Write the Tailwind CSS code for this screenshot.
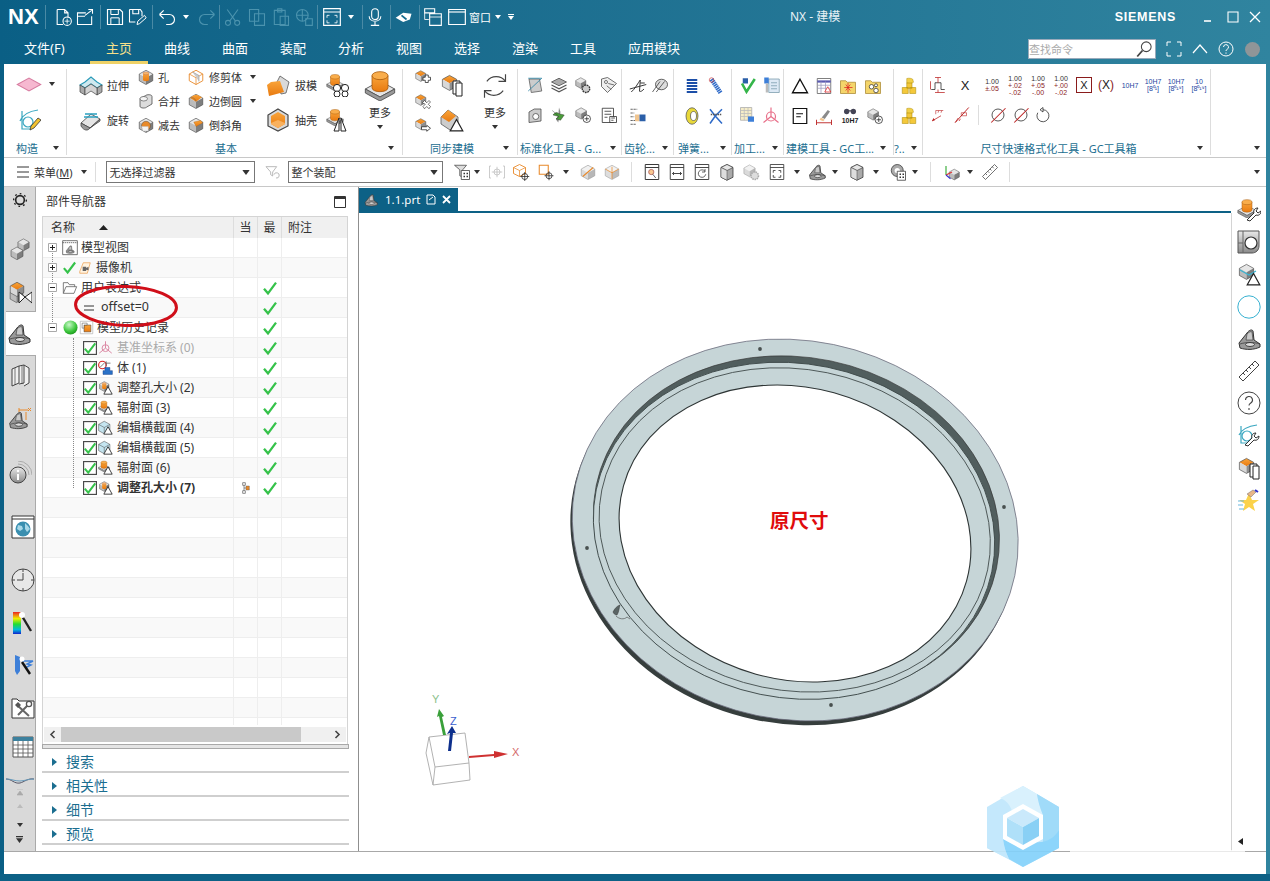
<!DOCTYPE html>
<html lang="zh"><head><meta charset="utf-8"><title>NX - 建模</title>
<script src="https://cdn.jsdelivr.net/npm/@tailwindcss/browser@4"></script></head>
<body class="overflow-hidden">
<svg class="absolute w-0 h-0">
<defs>
<linearGradient id="gg" x1="0" y1="0" x2="0" y2="1"><stop offset="0" stop-color="#e8e8e8"/><stop offset="1" stop-color="#8a8a8a"/></linearGradient>
<linearGradient id="og" x1="0" y1="0" x2="0" y2="1"><stop offset="0" stop-color="#f9a43a"/><stop offset="1" stop-color="#e87a10"/></linearGradient>
<linearGradient id="rb" x1="0" y1="0" x2="0" y2="1"><stop offset="0" stop-color="#e22"/><stop offset=".3" stop-color="#ee0"/><stop offset=".55" stop-color="#2d3"/><stop offset=".8" stop-color="#0bd"/><stop offset="1" stop-color="#12c"/></linearGradient>
<radialGradient id="ball" cx=".4" cy=".3" r=".8"><stop offset="0" stop-color="#c8f8c8"/><stop offset=".6" stop-color="#3fc83f"/><stop offset="1" stop-color="#128a12"/></radialGradient>
</defs>
<symbol id="ca" viewBox="0 0 6 4"><path d="M0 0h6L3 4z" fill="#333"/></symbol>
<symbol id="caw" viewBox="0 0 6 4"><path d="M0 0h6L3 4z" fill="#fff"/></symbol>
<symbol id="ck" viewBox="0 0 24 24"><path d="M3 13l6 7L21 4" fill="none" stroke="#35c24a" stroke-width="3.4"/></symbol>
<symbol id="tr" viewBox="0 0 24 24"><path d="M12 4l10 18H2z" fill="#fff" stroke="#222" stroke-width="2"/></symbol>
<symbol id="cb" viewBox="0 0 24 24"><path d="M12 3l9 5-9 5-9-5z" fill="url(#og)"/><path d="M3 8l9 5v9l-9-5z" fill="#d8d8d8"/><path d="M21 8l-9 5v9l9-5z" fill="#8e8e8e"/><path d="M12 3l9 5v9l-9 5-9-5V8z" fill="none" stroke="#444" stroke-width=".8"/></symbol>
<symbol id="cg" viewBox="0 0 24 24"><path d="M12 3l9 5-9 5-9-5z" fill="#e6e6e6"/><path d="M3 8l9 5v9l-9-5z" fill="#bcbcbc"/><path d="M21 8l-9 5v9l9-5z" fill="#7e7e7e"/><path d="M12 3l9 5v9l-9 5-9-5V8z" fill="none" stroke="#444" stroke-width=".8"/></symbol>
<symbol id="cy" viewBox="0 0 24 24"><path d="M1 15l11-6 11 6-11 6z" fill="#e4e4e4" stroke="#555" stroke-width=".7"/><path d="M1 15v3l11 6 11-6v-3l-11 6z" fill="#999" stroke="#555" stroke-width=".7"/><path d="M6 5v9c0 4 12 4 12 0V5z" fill="url(#og)" stroke="#a85b0c" stroke-width=".6"/><ellipse cx="12" cy="5" rx="6" ry="3" fill="#f9ad4b" stroke="#a85b0c" stroke-width=".6"/></symbol>
<symbol id="dia" viewBox="0 0 24 16"><path d="M1 8l11-6 11 6-11 6z" fill="#f6b8d0" stroke="#d77ca0"/></symbol>
<symbol id="sk" viewBox="0 0 24 24"><path d="M3 13C6 6 13 3 21 2M5 3v18h9" fill="none" stroke="#3aa7c0" stroke-width="1.2"/><circle cx="11" cy="14" r="5" fill="none" stroke="#3aa7c0" stroke-width="1.2"/><path d="M13 22l1-4 7-8 3 2-7 8z" fill="#f2c230" stroke="#333" stroke-width=".8"/></symbol>
<symbol id="ext" viewBox="0 0 24 24"><path d="M1 12l5-3 6-5 6 5 5 3-5 3-6-4-6 4z" fill="#cfe9ef" stroke="#2a9ab8" stroke-width="1.1"/><path d="M1 12v7l5 3v-7zM23 12v7l-5 3v-7z" fill="#aaa" stroke="#444" stroke-width=".7"/><path d="M6 15v7l6-4 6 4v-7l-6-4z" fill="#d4d4d4" stroke="#444" stroke-width=".7"/></symbol>
<symbol id="rev" viewBox="0 0 24 24"><path d="M2 15l10-9 9 5-10 9z" fill="#e5e5e5" stroke="#444" stroke-width=".8"/><path d="M2 15v3c3 5 7 5 9 2l10-7v-2l-10 9z" fill="#999" stroke="#444" stroke-width=".8"/><path d="M6 6h12M5 9l14 0" stroke="#2aa0c0" stroke-width="1.3"/></symbol>
<symbol id="hole" viewBox="0 0 24 24"><use href="#cg" width="24" height="24"/><path d="M8 7v9c0 2 8 2 8 0V7z" fill="url(#og)"/><ellipse cx="12" cy="7" rx="4" ry="2" fill="#f7b368" stroke="#955" stroke-width=".4"/></symbol>
<symbol id="uni" viewBox="0 0 24 24"><path d="M4 9v10c0 3 8 3 9 1l7-4V6c0-3-7-3-9-1L5 8z" fill="#dcdcdc" stroke="#444"/><ellipse cx="9" cy="9" rx="5" ry="3" fill="#f4f4f4" stroke="#444" stroke-width=".8"/></symbol>
<symbol id="sub" viewBox="0 0 24 24"><use href="#cg" width="24" height="24"/><circle cx="12" cy="13" r="6" fill="#e88a2a" stroke="#444" stroke-width=".6"/><path d="M6 14h9v6H8z" fill="#f4f4f4" stroke="#bbb" stroke-width=".6"/></symbol>
<symbol id="trim" viewBox="0 0 24 24"><path d="M12 3l9 5v9l-9 5-9-5V8z" fill="#fff" stroke="#e8892a" stroke-width="1.2"/><path d="M3 8l9 5 9-5M12 13v9" fill="none" stroke="#e8892a"/><path d="M7 5l9 5v8" fill="#ccc" stroke="#888" stroke-width=".7"/></symbol>
<symbol id="bl" viewBox="0 0 24 24"><use href="#cg" width="24" height="24"/><path d="M4 8c4-4 9-5 10-4l6 3-8 6z" fill="url(#og)"/><path d="M12 13c-1-4-3-6-8-5" fill="none" stroke="#555" stroke-width=".6"/></symbol>
<symbol id="cha" viewBox="0 0 24 24"><use href="#cg" width="24" height="24"/><path d="M9 8l9-2 3 3-9 5z" fill="url(#og)" stroke="#a85b0c" stroke-width=".4"/></symbol>
<symbol id="dr" viewBox="0 0 24 24"><path d="M11 9L14 3l9 6-3 11-5 1z" fill="#d9d9d9" stroke="#444" stroke-width=".7"/><path d="M1 13L5 7l6 2 9 0-0 .5-5 11-13 3z" fill="none"/><path d="M1 12l4-3 9-1 4 11-15 4z" fill="url(#og)"/></symbol>
<symbol id="she" viewBox="0 0 24 24"><path d="M12 1l10 6v11l-10 5-10-5V7z" fill="#d8d8d8" stroke="#444" stroke-width="1.2"/><path d="M5 8l7-4 7 4v8l-7 4-7-4z" fill="url(#og)"/><path d="M5 15l7-3 7 3v1l-7 4-7-4z" fill="#f9b15e"/></symbol>
<symbol id="cp" viewBox="0 0 24 24"><use href="#cy" width="18" height="18" y="0"/><g fill="#fff" stroke="#222"><circle cx="11" cy="15" r="3.6"/><circle cx="19" cy="15" r="3.6"/><circle cx="11" cy="21" r="3"/><circle cx="19" cy="21" r="3"/></g></symbol>
<symbol id="cm" viewBox="0 0 24 24"><use href="#cy" width="18" height="18" y="0"/><path d="M13 10l-5 13h5zM15 10l5 13h-5z" fill="#fff" stroke="#222"/></symbol>
<symbol id="sp" viewBox="0 0 24 24"><use href="#cb" width="18" height="18"/><path d="M15 8h4v3h3v4h-3v3h-4v-3h-3v-4h3z" fill="#fff" stroke="#222"/></symbol>
<symbol id="sx" viewBox="0 0 24 24"><use href="#cb" width="18" height="18"/><path d="M11 13l3-3 3 3 3-3 2 2-3 3 3 3-2 3-3-3-3 3-2-3 3-3z" fill="#fff" stroke="#222" stroke-width=".8"/></symbol>
<symbol id="sa" viewBox="0 0 24 24"><use href="#cb" width="18" height="18"/><path d="M10 13h7v-2l5 4-5 4v-2h-7z" fill="#fff" stroke="#222"/></symbol>
<symbol id="sc" viewBox="0 0 24 24"><use href="#cb" width="19" height="19"/><path d="M13 8h7v13h-7z" fill="#fff" stroke="#222"/><path d="M16 10h6v13h-6z" fill="#fff" stroke="#222"/></symbol>
<symbol id="st" viewBox="0 0 24 24"><path d="M1 9l7-7 10 7v9l-8 4-9-6z" fill="#ccc" stroke="#444" stroke-width=".7"/><path d="M1 9l7-7 8 6-7 6z" fill="url(#og)"/><use href="#tr" x="9" y="9" width="15" height="15"/></symbol>
<symbol id="ref" viewBox="0 0 24 24"><path d="M5 8A10 10 0 0 1 21 8M19 16A10 10 0 0 1 3 16" fill="none" stroke="#444"/><path d="M21 2v6h-6M3 22v-6h6" fill="none" stroke="#444"/></symbol>
<symbol id="ico-new" viewBox="0 0 24 24"><path d="M5 3h9l4 4v6M5 3v18h7M14 3v4h4" fill="none" stroke="#fff" stroke-width="1.3"/><circle cx="17" cy="17" r="5" fill="none" stroke="#fff" stroke-width="1.3"/><path d="M17 14v6M14 17h6" stroke="#fff"/></symbol>
<symbol id="ico-open" viewBox="0 0 24 24"><path d="M13 7H3v14h17V11" fill="none" stroke="#fff" stroke-width="1.3"/><path d="M3 11h9M12 10l8-6M16 3h5v5" fill="none" stroke="#fff" stroke-width="1.3"/></symbol>
<symbol id="ico-save" viewBox="0 0 24 24"><path d="M3 3h15l3 3v15H3z" fill="none" stroke="#fff" stroke-width="1.4"/><path d="M7 3v6h9V3M7 21v-8h10v8" fill="none" stroke="#fff" stroke-width="1.2"/></symbol>
<symbol id="ico-saveas" viewBox="0 0 24 24"><path d="M3 3h13l2 3v5M3 3v15h7M7 3v5h7V3" fill="none" stroke="#fff" stroke-width="1.3"/><path d="M12 21l1-4 8-7 2 3-8 7z" fill="none" stroke="#fff" stroke-width="1.2"/></symbol>
<symbol id="ico-undo" viewBox="0 0 24 24"><path d="M3 9h12a6 6 0 0 1 0 12h-4M3 9l5-5M3 9l5 5" fill="none" stroke="#fff" stroke-width="1.4"/></symbol>
<symbol id="ico-redo" viewBox="0 0 24 24"><path d="M21 9H9a6 6 0 0 0 0 12h4M21 9l-5-5M21 9l-5 5" fill="none" stroke="#4b93ae" stroke-width="1.4"/></symbol>
<symbol id="ico-cut" viewBox="0 0 24 24"><circle cx="6" cy="19" r="3" fill="none" stroke="#4b93ae" stroke-width="1.3"/><circle cx="17" cy="19" r="3" fill="none" stroke="#4b93ae" stroke-width="1.3"/><path d="M8 17L18 3M15 17L5 3" stroke="#4b93ae" stroke-width="1.3"/></symbol>
<symbol id="ico-copy" viewBox="0 0 24 24"><path d="M3 3h11v14H3zM9 8h12v14H9z" fill="none" stroke="#4b93ae" stroke-width="1.3"/></symbol>
<symbol id="ico-paste" viewBox="0 0 24 24"><path d="M4 4h13v17H4zM8 2h5v4H8zM11 11h10v11H11z" fill="none" stroke="#4b93ae" stroke-width="1.3"/></symbol>
<symbol id="ico-del" viewBox="0 0 24 24"><circle cx="10" cy="10" r="7" fill="none" stroke="#4b93ae" stroke-width="1.3"/><path d="M3 10h14M10 3v14M14 14h8v8h-8z" fill="none" stroke="#4b93ae" stroke-width="1.3"/></symbol>
<symbol id="ico-fit" viewBox="0 0 24 24"><path d="M2 2h20v20H2zM2 6h20" fill="none" stroke="#fff" stroke-width="1.4"/><path d="M6 10h3M6 10v3M18 10h-3M18 10v3M6 19h3M6 19v-3M18 19h-3M18 19v-3" stroke="#fff"/></symbol>
<symbol id="ico-mic" viewBox="0 0 24 24"><rect x="8" y="2" width="8" height="13" rx="4" fill="none" stroke="#fff" stroke-width="1.3"/><path d="M5 11c0 8 14 8 14 0M12 18v4M7 22h10" fill="none" stroke="#fff" stroke-width="1.3"/></symbol>
<symbol id="ico-hand" viewBox="0 0 24 24"><path d="M2 13l9-6 10 1-2 7-8 3z" fill="#fff"/><path d="M9 10l6 5" stroke="#12698d" stroke-width="2"/></symbol>
<symbol id="ico-win1" viewBox="0 0 24 24"><path d="M2 2h12v5H2zM8 8h14v14H8z" fill="none" stroke="#fff" stroke-width="1.3"/><path d="M8 12h14" stroke="#fff"/><path d="M2 7v8h5" fill="none" stroke="#fff"/></symbol>
<symbol id="ico-win2" viewBox="0 0 24 24"><path d="M2 3h20v18H2z" fill="none" stroke="#fff" stroke-width="1.4"/><path d="M2 6h20" stroke="#fff" stroke-width="1.4"/></symbol>
<symbol id="t-filt" viewBox="0 0 24 24"><path d="M3 4h16l-6 8v6l-3-2v-4z" fill="#fff" stroke="#aaa" stroke-width="1.2"/><path d="M15 16a4 4 0 1 1 3 5" fill="none" stroke="#aaa" stroke-width="1.2"/></symbol>
<symbol id="t-tree" viewBox="0 0 24 24"><path d="M2 3h16l-5 6v10l-4-2V9z" fill="#ddd" stroke="#444"/><path d="M11 10h11v12H11z" fill="#fff" stroke="#333"/><path d="M14 13h2v2h-2zM18 13h2v2h-2zM14 17h2v2h-2zM18 17h2v2h-2z" fill="#333"/></symbol>
<symbol id="t-snap" viewBox="0 0 24 24"><path d="M4 4H2v16h2M20 4h2v16h-2" fill="none" stroke="#bbb"/><circle cx="12" cy="12" r="4" fill="none" stroke="#bbb"/><path d="M12 5v14M5 12h14" stroke="#bbb"/></symbol>
<symbol id="t-wire" viewBox="0 0 24 24"><path d="M10 2l8 4v8l-8 4-8-4V6z" fill="#fff" stroke="#e8892a" stroke-width="1.2"/><path d="M2 6l8 4 8-4M10 10v8" fill="none" stroke="#e8892a"/><circle cx="17" cy="18" r="4" fill="none" stroke="#222"/><path d="M17 12v12M11 18h12" stroke="#222"/></symbol>
<symbol id="t-sq" viewBox="0 0 24 24"><path d="M3 3h12v12H3z" fill="#fff" stroke="#e8892a" stroke-width="1.4"/><circle cx="16" cy="17" r="4" fill="none" stroke="#222"/><path d="M16 11v12M10 17h12" stroke="#222"/></symbol>
<symbol id="t-f1" viewBox="0 0 24 24"><use href="#cg" width="24" height="24" opacity=".55"/><path d="M5 18L19 6" stroke="#e8892a" stroke-width="1.5"/></symbol>
<symbol id="t-f2" viewBox="0 0 24 24"><use href="#cg" width="24" height="24" opacity=".5"/><path d="M12 5v16M3 8l9 5 9-5" stroke="#e8892a" fill="none"/></symbol>
<symbol id="t-w1" viewBox="0 0 24 24"><path d="M3 2h18v20H3zM3 6h18" fill="none" stroke="#333" stroke-width="1.3"/><circle cx="11" cy="12" r="3.5" fill="#f8c890" stroke="#a55"/><path d="M13 15l4 5" stroke="#333"/></symbol>
<symbol id="t-w2" viewBox="0 0 24 24"><path d="M3 2h18v20H3zM3 6h18M6 14h12M6 14l2-2M6 14l2 2M18 14l-2-2M18 14l-2 2" fill="none" stroke="#333" stroke-width="1.2"/></symbol>
<symbol id="t-w3" viewBox="0 0 24 24"><path d="M3 2h18v20H3zM3 6h18" fill="none" stroke="#333" stroke-width="1.2"/><path d="M16 11a5 5 0 1 0 1 4M16 8v4h-4" fill="none" stroke="#333"/></symbol>
<symbol id="t-fit" viewBox="0 0 24 24"><path d="M3 2h18v20H3zM3 6h18M7 10h3M7 10v3M17 10h-3M17 10v3M7 19h3M7 19v-3M17 19h-3M17 19v-3" fill="none" stroke="#333" stroke-width="1.1"/></symbol>
<symbol id="t-gear" viewBox="0 0 24 24"><use href="#cg" width="20" height="20" opacity=".55"/><circle cx="17" cy="17" r="5" fill="#ddd" stroke="#aaa" stroke-width="2" stroke-dasharray="2 1"/></symbol>
<symbol id="t-part" viewBox="0 0 24 24"><path d="M2 16L10 6c2-3 5-4 6-2l1 9 6 4 0 3c-6 3-14 3-20 1z" fill="#9a9a9a" stroke="#333" stroke-width="1"/><path d="M3 17c6-2 14-2 20 0" fill="none" stroke="#333" stroke-width=".7"/><path d="M10 7c2-2 4-3 5-2l1 8-7 0z" fill="#c9c9c9" stroke="#333" stroke-width=".6"/><ellipse cx="13" cy="17.5" rx="4.5" ry="2" fill="#ddd" stroke="#333" stroke-width=".9"/></symbol>
<symbol id="t-hex" viewBox="0 0 24 24"><path d="M12 2l8 4v13l-8 4-8-4V6z" fill="#aaa" stroke="#333"/><path d="M4 6l8 4 8-4-8-4z" fill="#e6e6e6" stroke="#333" stroke-width=".8"/><path d="M12 10v13L4 19V6z" fill="#ddd" stroke="#333" stroke-width=".6"/></symbol>
<symbol id="t-ball" viewBox="0 0 24 24"><circle cx="11" cy="10" r="8" fill="#aaa" stroke="#333"/><circle cx="11" cy="10" r="3.5" fill="#fff"/><path d="M11 11h11v12H11z" fill="#fff" stroke="#333"/><path d="M14 14h2v2h-2zM18 14h2v2h-2zM14 18h2v2h-2zM18 18h2v2h-2z" fill="#333"/></symbol>
<symbol id="t-axis" viewBox="0 0 24 24"><use href="#cg" x="6" y="6" width="18" height="18"/><path d="M4 16V4" stroke="#3a3" stroke-width="1.5"/><path d="M4 16l8-4" stroke="#d33" stroke-width="1.5"/><path d="M4 16l6 5" stroke="#33c" stroke-width="1.5"/></symbol>
<symbol id="rule" viewBox="0 0 24 24"><path d="M2 18L18 2l4 4L6 22z" fill="#fff" stroke="#444"/><path d="M6 14l2 2M9 11l2 2M12 8l2 2M15 5l2 2" stroke="#444"/></symbol>
<symbol id="gear" viewBox="0 0 24 24"><circle cx="12" cy="12" r="6.5" fill="none" stroke="#222" stroke-width="2.4"/><circle cx="12" cy="12" r="9.5" fill="none" stroke="#222" stroke-width="2" stroke-dasharray="2.6 4.6"/></symbol>
<symbol id="l-stack" viewBox="0 0 24 24"><use href="#cg" x="8" y="0" width="15" height="15"/><use href="#cg" x="1" y="8" width="16" height="16"/></symbol>
<symbol id="l-asm" viewBox="0 0 24 24"><use href="#cg" y="7" width="17" height="17"/><use href="#cb" width="18" height="18"/><path d="M11 12l6 5-6 6zM24 12l-7 5 7 6z" fill="#fff" stroke="#222"/></symbol>
<symbol id="l-book" viewBox="0 0 24 24"><path d="M4 6l7-3v17l-7 3zM11 3l5-1v18l-5 1M16 2l5 3v15l-5 3" fill="#f0f0f0" stroke="#444"/><path d="M7 5v17M14 3v18" stroke="#444" stroke-width=".7"/></symbol>
<symbol id="l-dim" viewBox="0 0 24 24"><use href="#t-part" y="4" width="20" height="20"/><path d="M11 6V2M11 4h9M20 2l3 3M23 2l-3 3M18 6v8" fill="none" stroke="#e8892a"/></symbol>
<symbol id="l-info" viewBox="0 0 24 24"><circle cx="10" cy="14" r="8" fill="url(#gg)" stroke="#444"/><path d="M10 13v6" stroke="#fff" stroke-width="2"/><circle cx="10" cy="10" r="1.2" fill="#fff"/><path d="M10 3a11 11 0 0 1 11 11M10 0a14 14 0 0 1 14 14" fill="none" stroke="#aaa"/></symbol>
<symbol id="l-web" viewBox="0 0 24 24"><path d="M1 1h22v22H1zM1 4h22" fill="#fff" stroke="#333" stroke-width="1"/><circle cx="12" cy="14" r="7.5" fill="#3a8fb0"/><path d="M7 10l4 1 1 3-3 2-3-2M14 8l3 3 2 3-3 3-2-3z" fill="#a8d8e8"/></symbol>
<symbol id="l-clock" viewBox="0 0 24 24"><circle cx="12" cy="12" r="11" fill="#e8e8e8" stroke="#444"/><path d="M12 12V5M12 12H6M12 1v3M12 20v3M1 12h3M20 12h3" stroke="#444"/></symbol>
<symbol id="l-rb" viewBox="0 0 24 24"><rect x="2" y="1" width="8" height="22" fill="url(#rb)"/><path d="M11 5l9 15" stroke="#222" stroke-width="2.4"/><circle cx="11" cy="4" r="3" fill="#fff"/></symbol>
<symbol id="l-mill" viewBox="0 0 24 24"><path d="M4 2l5 2v14l-3 4-2-4z" fill="#3d7fd8"/><path d="M11 8h11l-6 3 4 1-6 3" fill="none" stroke="#3d7fd8" stroke-width="1.4"/><path d="M11 9l8 12" stroke="#111" stroke-width="2.4"/><circle cx="11" cy="6" r="2.5" fill="#fff"/></symbol>
<symbol id="l-tool" viewBox="0 0 24 24"><path d="M1 4h5l2 2h15v17H1z" fill="#fff" stroke="#333"/><path d="M6 10l12 11M18 9L7 20" stroke="#666" stroke-width="2"/><circle cx="18" cy="9" r="2.6" fill="#fff" stroke="#555" stroke-width="1.3"/><path d="M4 10l3-3 3 3-3 3z" fill="#555"/></symbol>
<symbol id="l-tab" viewBox="0 0 24 24"><path d="M2 2h20v20H2z" fill="#fff" stroke="#555"/><path d="M2 2h20v4H2z" fill="#3d819e"/><path d="M2 10h20M2 14h20M2 18h20M7 6v16M12 6v16M17 6v16" stroke="#555" stroke-width=".8"/></symbol>
<symbol id="r-wr" viewBox="0 0 24 24"><use href="#cy" width="20" height="20"/><path d="M10 22l7-7c-1-3 1-5 4-5l-2 3 2 2 3-2c0 3-2 5-5 4l-6 6z" fill="#fff" stroke="#333"/></symbol>
<symbol id="r-hole" viewBox="0 0 24 24"><path d="M1 1h21v15c0 4-3 7-7 7H1z" fill="url(#gg)" stroke="#555"/><circle cx="14" cy="13" r="6" fill="#fff" stroke="#333" stroke-width="1.2"/><path d="M6 1v22M1 13h5" stroke="#666"/></symbol>
<symbol id="r-cb" viewBox="0 0 24 24"><use href="#cg" width="19" height="19"/><path d="M3 8l9 5 7-4" fill="none" stroke="#3bb3d0" stroke-width="1.4"/><use href="#tr" x="9" y="9" width="15" height="15"/></symbol>
<symbol id="r-sk" viewBox="0 0 24 24"><path d="M2 12C5 6 12 3 20 2M4 3v17h8" fill="none" stroke="#3aa7c0" stroke-width="1.2"/><circle cx="10" cy="13" r="5" fill="none" stroke="#3aa7c0" stroke-width="1.2"/><path d="M8 22l7-7c-1-3 1-5 4-5l-2 3 2 2 3-2c0 3-2 5-5 4l-6 6z" fill="#fff" stroke="#333"/></symbol>
<symbol id="r-st" viewBox="0 0 24 24"><path d="M12 5l3 7h7l-6 4 2 7-6-4-6 4 2-7-6-4h7z" fill="#fbd24a"/><path d="M10 6l6-4 3 2-5 5z" fill="#e8b78a" stroke="#555" stroke-width=".4"/><path d="M18 2l3 2" stroke="#33c" stroke-width="2"/><path d="M1 13h6M1 17h5M2 21h5" stroke="#68b8e0" stroke-width="1.2"/></symbol>
<symbol id="view" viewBox="0 0 24 24"><path d="M1 1h6l2 0h14v21H1z" fill="#fff" stroke="#333"/><path d="M1 4h22" stroke="#333" stroke-dasharray="2 1"/><use href="#t-part" x="5" y="7" width="14" height="14"/></symbol>
<symbol id="cam" viewBox="0 0 24 24"><path d="M3 18L9 3h12l-5 18H3z" fill="#fff3e0" stroke="#e8892a"/><path d="M8 10h6v7H8zM14 12l4-2v6l-4-1z" fill="#666"/></symbol>
<symbol id="fold" viewBox="0 0 24 24"><path d="M2 20V4h7l2 3h8v3" fill="none" stroke="#444"/><path d="M2 20l4-10h16l-4 10z" fill="#fff" stroke="#444"/></symbol>
<symbol id="hist" viewBox="0 0 24 24"><path d="M2 2h20v20H2z" fill="#fff" stroke="#aaa"/><path d="M8 8h11v11H8z" fill="url(#og)" stroke="#444" stroke-width=".8"/><path d="M5 5h8v3H8v5H5z" fill="#fff" stroke="#444" stroke-width=".8"/></symbol>
<symbol id="chk" viewBox="0 0 24 24"><rect x="1" y="1" width="22" height="22" fill="#fff" stroke="#4a4a4a" stroke-width="2"/><use href="#ck" width="24" height="24"/></symbol>
<symbol id="csys" viewBox="0 0 24 24"><g fill="none" stroke="#dc8aa5" stroke-width="1.6"><circle cx="12" cy="13" r="5.5"/><path d="M12 2v11M12 13L2 21M12 13l10 8"/></g></symbol>
<symbol id="body" viewBox="0 0 24 24"><circle cx="7" cy="8" r="6" fill="#fff" stroke="#d22" stroke-width="1.8"/><path d="M3 12l8-8M13 2v8M13 5h7" stroke="#333"/><path d="M11 12h8v5h4v6H8v-6h3z" fill="#2a72c8" stroke="#123a80" stroke-width=".7"/></symbol>
<symbol id="rad" viewBox="0 0 24 24"><use href="#cy" width="19" height="19"/><use href="#tr" x="8" y="8" width="16" height="16"/></symbol>
<symbol id="sec" viewBox="0 0 24 24"><path d="M1 7l9-5 9 5v10l-9 5-9-5z" fill="#c5e5f0" stroke="#444" stroke-width=".8"/><path d="M1 7l9 5 9-5M10 12v10" fill="none" stroke="#444" stroke-width=".8"/><use href="#tr" x="8" y="8" width="16" height="16"/></symbol>
<symbol id="hsz" viewBox="0 0 24 24"><use href="#hole" width="20" height="20"/><use href="#tr" x="8" y="8" width="16" height="16"/></symbol>
<symbol id="dep" viewBox="0 0 12 18"><path d="M1 1h4v4H1zM1 13h4v4H1z" fill="#fff" stroke="#555"/><path d="M6 6h5v6H6z" fill="#e8892a" stroke="#555" stroke-width=".6"/><path d="M3 5v8M3 9h3" stroke="#555"/></symbol>
<symbol id="g1" viewBox="0 0 24 24"><path d="M4 4h14l3 16-14 2z" fill="#ccc" stroke="#555"/><path d="M3 3h18M3 20l18-17" stroke="#3a8aa8" stroke-width="1.2"/></symbol>
<symbol id="g2" viewBox="0 0 24 24"><path d="M12 3l10 5-10 5L2 8z" fill="#aaa" stroke="#444"/><path d="M2 12l10 5 10-5M2 16l10 5 10-5" fill="none" stroke="#555" stroke-width="1.6"/></symbol>
<symbol id="g3" viewBox="0 0 24 24"><use href="#cg" width="18" height="18"/><circle cx="16" cy="17" r="5" fill="#ccc" stroke="#333" stroke-width="1.8" stroke-dasharray="2.4 1"/></symbol>
<symbol id="g4" viewBox="0 0 24 24"><path d="M10 2l12 8-12 12L2 14V4z" fill="#eee" stroke="#444"/><circle cx="8" cy="8" r="2" fill="#fff" stroke="#444"/><path d="M11 10l8 2M9 13l6 5" stroke="#444"/></symbol>
<symbol id="g5" viewBox="0 0 24 24"><use href="#cg" width="19" height="19"/><circle cx="17" cy="17" r="5" fill="#fff" stroke="#222"/><path d="M14 17h6M17 14v6" stroke="#222"/></symbol>
<symbol id="g6" viewBox="0 0 24 24"><path d="M4 22V8l7-4 9 0v16z" fill="#ccc" stroke="#444"/><circle cx="13" cy="14" r="4" fill="#fff" stroke="#444"/></symbol>
<symbol id="g7" viewBox="0 0 24 24"><path d="M12 2l2 6-3 14-3-4 3-6z" fill="#8a8a8a"/><path d="M3 6l7 6M4 12c3-4 6-4 7-2l8 2-5 7-6-2 4-3z" fill="#4a9b3a" stroke="#222" stroke-width=".5"/></symbol>
<symbol id="g8" viewBox="0 0 24 24"><path d="M3 3h15v19H3z" fill="#fff" stroke="#222"/><path d="M6 7h9M6 11h9M6 15h4" stroke="#222"/><path d="M13 14h9v8h-9z" fill="#fff" stroke="#222"/><path d="M15 16h5M15 19h3" stroke="#222"/></symbol>
<symbol id="gt1" viewBox="0 0 24 24"><path d="M3 20C8 16 12 8 15 4l-1 15c2 1 4-1 6-3M15 8h6M1 16l22-6" fill="none" stroke="#333" stroke-width="1.3"/></symbol>
<symbol id="gt2" viewBox="0 0 24 24"><ellipse cx="14" cy="10" rx="8" ry="7" fill="#ddd" stroke="#333"/><path d="M2 20L12 6M7 20l11-14" stroke="#333"/></symbol>
<symbol id="gt3" viewBox="0 0 24 24"><path d="M2 3h9M2 8h5M2 13h5M2 18h9M2 23h7" stroke="#333" stroke-dasharray="3 1"/><path d="M8 10h6v9H8z" fill="#f0c590"/><path d="M14 10h8v9h-8z" fill="#2b5fa8"/></symbol>
<symbol id="sp1" viewBox="0 0 24 24"><path d="M5 4h14M5 8h14M5 12h14M5 16h14M5 20h14" stroke="#1c4fa8" stroke-width="2.4"/></symbol>
<symbol id="sp2" viewBox="0 0 24 24"><path d="M6 3l12 18" stroke="#2e6ac8" stroke-width="6" stroke-dasharray="2 .8"/><circle cx="6" cy="4" r="3" fill="none" stroke="#c33" stroke-width=".8"/></symbol>
<symbol id="sp3" viewBox="0 0 24 24"><ellipse cx="12" cy="12" rx="8" ry="11" fill="#e8d83a" stroke="#555"/><ellipse cx="14" cy="12" rx="4" ry="6" fill="#fff" stroke="#555"/></symbol>
<symbol id="sp4" viewBox="0 0 24 24"><path d="M4 3l7 9 9 10M20 3l-9 9-7 10" fill="none" stroke="#2e6ac8" stroke-width="2"/><path d="M5 10h14" stroke="#555" stroke-dasharray="2 1" stroke-width="2"/></symbol>
<symbol id="m1" viewBox="0 0 24 24"><path d="M5 3h7v7H5z" fill="#2b5fa8"/><path d="M4 10l6 11L21 4" fill="none" stroke="#35b54a" stroke-width="3.4"/></symbol>
<symbol id="m2" viewBox="0 0 24 24"><path d="M9 4h14v18H9z" fill="#dde9f5" stroke="#79a"/><path d="M12 9h8M12 13h8M12 17h8" stroke="#79a"/><path d="M3 2h6v8H3z" fill="#3d7fd8"/><path d="M5 10h3v12H5z" fill="#bbb"/></symbol>
<symbol id="m3" viewBox="0 0 24 24"><path d="M2 2h15v17H2z" fill="#f6edc8" stroke="#aaa"/><path d="M2 6h15M2 10h15M2 14h15M7 2v17M12 2v17" stroke="#bbb"/><path d="M12 14h8v7h-8z" fill="#3d7fd8"/></symbol>
<symbol id="m4" viewBox="0 0 24 24"><g fill="none" stroke="#e8708a" stroke-width="1.6"><circle cx="12" cy="14" r="6"/><path d="M12 2v12M12 14L2 22M12 14l10 8"/></g></symbol>
<symbol id="b1" viewBox="0 0 24 24"><path d="M12 3l10 18H2z" fill="#fff" stroke="#111" stroke-width="1.8"/></symbol>
<symbol id="b2" viewBox="0 0 24 24"><path d="M3 2h18v20H3z" fill="#fff" stroke="#555"/><path d="M3 6h18" stroke="#5a5ab0" stroke-width="3"/><path d="M3 11h18M3 15h18M8 6v16M14 6v16" stroke="#99b"/><path d="M13 20l4-7 4 7z" fill="#fff" stroke="#d22"/></symbol>
<symbol id="b3" viewBox="0 0 24 24"><path d="M2 5h7l2 2h11v15H2z" fill="#f4d56a" stroke="#a83"/><path d="M12 8v13M7 14h11M9 10l6 8M15 10l-6 8" stroke="#d22"/></symbol>
<symbol id="b4" viewBox="0 0 24 24"><path d="M2 5h7l2 2h11v15H2z" fill="#f4d56a" stroke="#a83"/><circle cx="10" cy="13" r="3" fill="#fff" stroke="#333"/><circle cx="16" cy="18" r="3" fill="#fff" stroke="#333"/><circle cx="16" cy="11" r="2" fill="#fff" stroke="#333"/></symbol>
<symbol id="b5" viewBox="0 0 24 24"><path d="M3 2h18v20H3z" fill="#fff" stroke="#111" stroke-width="1.6"/><path d="M7 9h9M7 13h6" stroke="#111" stroke-width="1.4"/></symbol>
<symbol id="b6" viewBox="0 0 24 24"><path d="M2 21h20M2 17v8M22 17v8" stroke="#b22" stroke-width="1.2"/><path d="M9 14l8-10 3 2-7 10z" fill="#8a8a8a"/><path d="M8 14l5 3-2 2-5-2z" fill="#f0c590"/></symbol>
<symbol id="b7" viewBox="0 0 24 24"><circle cx="7" cy="6" r="4" fill="#445"/><circle cx="17" cy="6" r="4" fill="#445"/><path d="M10 5h4" stroke="#445" stroke-width="2"/></symbol>
<symbol id="gc" viewBox="0 0 24 24"><path d="M9 2c3-1 7 0 8 1l1 4-4 2-5-1z" fill="#f2d04a" stroke="#a80" stroke-width=".6"/><path d="M9 8h7v7H9zM3 14h8v8H3zM13 14h8v8h-8z" fill="#f4c83a" stroke="#a80" stroke-width=".7"/></symbol>
<symbol id="d1" viewBox="0 0 24 24"><path d="M8 9h8v9h5M8 9v9H3" fill="none" stroke="#222"/><path d="M8 2h8M12 2v7M8 22h13M12 18v4" stroke="#b22"/><path d="M2 7v11" stroke="#b22"/></symbol>
<symbol id="d2" viewBox="0 0 24 24"><path d="M4 20l12-7" stroke="#b22"/><path d="M4 20l4-1-2-3z" fill="#b22"/><path d="M9 11V6h10M12 9l1-3M16 9l1-3" fill="none" stroke="#b22" stroke-width=".8"/></symbol>
<symbol id="d3" viewBox="0 0 24 24"><path d="M3 22L21 2" stroke="#b22" stroke-width="1.3"/><path d="M3 22l4-6M8 20l2-3" stroke="#b22"/><path d="M11 9h7v4h-7z" fill="none" stroke="#b22" stroke-width=".8"/></symbol>
<symbol id="d4" viewBox="0 0 24 24"><circle cx="12" cy="12" r="8" fill="#fff" stroke="#222"/><path d="M3 22L22 3" stroke="#b22" stroke-width="1.4"/></symbol>
<symbol id="d5" viewBox="0 0 24 24"><path d="M12 5a8 8 0 1 1-7 4M12 2v6l-4-3z" fill="none" stroke="#222"/></symbol>
</svg>

<div class="relative w-[1270px] h-[881px] flex flex-col overflow-hidden bg-gradient-to-r from-[#0a5f85] to-[#30849f] font-['Noto_Sans','Noto_Sans_CJK_SC',sans-serif] text-[#333]">

<!-- title bar -->
<header class="h-[34px] shrink-0 flex items-center text-white">
  <span class="ml-2 w-[32px] text-[22px] leading-none font-bold whitespace-nowrap font-['Liberation_Sans',sans-serif]">NX</span>
  <i class="ml-[5px] w-px h-6 bg-[#4a8aa5]"></i>
  <svg class="ml-[7px] w-5 h-5"><use href="#ico-new"/></svg>
  <svg class="ml-[2px] w-5 h-5"><use href="#ico-open"/></svg>
  <i class="ml-[5px] w-px h-6 bg-[#4a8aa5]"></i>
  <svg class="ml-1 w-5 h-5"><use href="#ico-save"/></svg>
  <svg class="ml-[2px] w-5 h-5"><use href="#ico-saveas"/></svg>
  <i class="ml-[5px] w-px h-6 bg-[#4a8aa5]"></i>
  <svg class="ml-1 w-5 h-5"><use href="#ico-undo"/></svg>
  <svg class="ml-[6px] w-[6px] h-1"><use href="#caw"/></svg>
  <svg class="ml-2 w-5 h-5"><use href="#ico-redo"/></svg>
  <i class="ml-[2px] w-px h-6 bg-[#4a8aa5]"></i>
  <svg class="ml-[3px] w-5 h-5"><use href="#ico-cut"/></svg>
  <svg class="ml-1 w-5 h-5"><use href="#ico-copy"/></svg>
  <svg class="ml-1 w-5 h-5"><use href="#ico-paste"/></svg>
  <svg class="ml-[3px] w-5 h-5"><use href="#ico-del"/></svg>
  <i class="ml-[3px] w-px h-6 bg-[#4a8aa5]"></i>
  <svg class="ml-1 w-5 h-5"><use href="#ico-fit"/></svg>
  <svg class="ml-[6px] w-[6px] h-1"><use href="#caw"/></svg>
  <i class="ml-2 w-px h-6 bg-[#4a8aa5]"></i>
  <svg class="ml-[2px] w-5 h-5"><use href="#ico-mic"/></svg>
  <i class="ml-[5px] w-px h-6 bg-[#4a8aa5]"></i>
  <svg class="ml-[3px] w-5 h-5"><use href="#ico-hand"/></svg>
  <i class="ml-[5px] w-px h-6 bg-[#4a8aa5]"></i>
  <svg class="ml-[3px] w-5 h-5"><use href="#ico-win1"/></svg>
  <svg class="ml-1 w-5 h-5"><use href="#ico-win2"/></svg>
  <span class="ml-[2px] text-[11px] leading-none">窗口</span>
  <svg class="ml-1 w-[6px] h-1"><use href="#caw"/></svg>
  <svg class="ml-[7px] w-[6px] h-[6px]" viewBox="0 0 6 6"><path d="M0 0h6v1H0zM0 2h6L3 6z" fill="#fff"/></svg>
  <span class="ml-[276px] text-[12px] text-[#e8f2f6]">NX - 建模</span>
  <span class="ml-auto text-[12.5px] font-bold tracking-[0.7px] font-['Liberation_Sans',sans-serif]">SIEMENS</span>
  <svg class="ml-[26px] w-3 h-3" viewBox="0 0 12 12"><path d="M2 10h7" stroke="#fff" stroke-width="1.6"/></svg>
  <svg class="ml-[13px] w-3 h-3" viewBox="0 0 12 12"><path d="M1 1h10v10H1z" fill="none" stroke="#fff" stroke-width="1.1"/></svg>
  <svg class="ml-[10px] mr-[9px] w-3 h-3" viewBox="0 0 12 12"><path d="M1 1l10 10M11 1L1 11" stroke="#fff" stroke-width="1.3"/></svg>
</header>

<!-- tabs -->
<nav class="h-[30px] shrink-0 flex items-center text-[13px] text-white pl-6">
  <span class="w-[66px]">文件(F)</span>
  <span class="relative w-[58px] h-full flex items-center justify-center text-[#f6e08a] border-b-[3px] border-[#efd267] pt-[3px]">主页</span>
  <span class="w-[58px] text-center">曲线</span>
  <span class="w-[58px] text-center">曲面</span>
  <span class="w-[58px] text-center">装配</span>
  <span class="w-[58px] text-center">分析</span>
  <span class="w-[58px] text-center">视图</span>
  <span class="w-[58px] text-center">选择</span>
  <span class="w-[58px] text-center">渲染</span>
  <span class="w-[58px] text-center">工具</span>
  <span class="ml-4">应用模块</span>
  <div class="ml-auto w-[128px] h-5 bg-white flex items-center border border-[#9ab]">
    <span class="text-[11px] text-[#aaa] leading-none">查找命令</span>
    <svg class="ml-auto mr-[2px] w-[18px] h-[18px]" viewBox="0 0 24 24"><circle cx="15" cy="9" r="6.5" fill="#fff" stroke="#444" stroke-width="1.4"/><path d="M10 14l-7 8" stroke="#444" stroke-width="2.4"/></svg>
  </div>
  <svg class="ml-[10px] w-4 h-4" viewBox="0 0 16 16"><path d="M1 5V1h4M11 1h4v4M15 11v4h-4M5 15H1v-4" fill="none" stroke="#fff"/></svg>
  <svg class="ml-[10px] w-4 h-4" viewBox="0 0 16 16"><path d="M1 12l7-8 7 8" fill="none" stroke="#fff" stroke-width="1.2"/></svg>
  <svg class="ml-[10px] w-4 h-4" viewBox="0 0 16 16"><circle cx="8" cy="8" r="7" fill="none" stroke="#fff"/><path d="M5.5 6a2.5 2.5 0 1 1 3.5 2.4c-.7.4-1 .8-1 1.6M8 11.5v1.2" fill="none" stroke="#fff"/></svg>
  <span class="ml-[11px] mr-[10px] w-[15px] h-[15px] rounded-full bg-[#8f9598]"></span>
</nav>

<main class="flex-1 mx-1 bg-white flex flex-col min-h-0">
  <!-- ribbon -->
  <section class="h-[93px] shrink-0 flex pt-[5px] pb-[2px] text-[11px] leading-none">
    <!-- 构造 -->
    <div class="w-[63px] shrink-0 flex flex-col border-r border-[#ddd]">
      <div class="h-[72px] pl-[12px] pt-[3px] flex flex-col">
        <div class="flex items-center h-6"><svg class="w-[26px] h-[17px]"><use href="#dia"/></svg><svg class="ml-[7px] w-[6px] h-1"><use href="#ca"/></svg></div>
        <svg class="mt-[12px] ml-[1px] w-6 h-6"><use href="#sk"/></svg>
      </div>
      <div class="h-[14px] flex items-center justify-between pl-[12px] pr-[7px] text-[#1b6e90]"><span>构造</span><svg class="w-[6px] h-1"><use href="#ca"/></svg></div>
    </div>
    <!-- 基本 -->
    <div class="w-[336px] shrink-0 flex flex-col border-r border-[#ddd]">
      <div class="h-[72px] flex">
        <div class="w-[63px] pl-[12px] pt-1 flex flex-col gap-[11px]">
          <div class="flex items-center gap-1 h-6"><svg class="w-6 h-6 shrink-0"><use href="#ext"/></svg><span>拉伸</span></div>
          <div class="flex items-center gap-1 h-6"><svg class="w-6 h-6 shrink-0"><use href="#rev"/></svg><span>旋转</span></div>
        </div>
        <div class="ml-[7px] w-[50px] flex flex-col gap-2">
          <div class="flex items-center gap-[3px] h-4"><svg class="w-[18px] h-[18px] shrink-0"><use href="#hole"/></svg><span>孔</span></div>
          <div class="flex items-center gap-[3px] h-4"><svg class="w-[18px] h-[18px] shrink-0"><use href="#uni"/></svg><span>合并</span></div>
          <div class="flex items-center gap-[3px] h-4"><svg class="w-[18px] h-[18px] shrink-0"><use href="#sub"/></svg><span>减去</span></div>
        </div>
        <div class="w-[78px] flex flex-col gap-2">
          <div class="flex items-center gap-1 h-4"><svg class="w-[18px] h-[18px] shrink-0"><use href="#trim"/></svg><span class="whitespace-nowrap">修剪体</span><svg class="ml-1 w-[6px] h-1 shrink-0"><use href="#ca"/></svg></div>
          <div class="flex items-center gap-1 h-4"><svg class="w-[18px] h-[18px] shrink-0"><use href="#bl"/></svg><span class="whitespace-nowrap">边倒圆</span><svg class="ml-1 w-[6px] h-1 shrink-0"><use href="#ca"/></svg></div>
          <div class="flex items-center gap-1 h-4"><svg class="w-[18px] h-[18px] shrink-0"><use href="#cha"/></svg><span class="whitespace-nowrap">倒斜角</span></div>
        </div>
        <div class="ml-[1px] w-[51px] pt-1 flex flex-col gap-[11px]">
          <div class="flex items-center gap-[5px] h-6"><svg class="w-6 h-6 shrink-0"><use href="#dr"/></svg><span>拔模</span></div>
          <div class="flex items-center gap-[5px] h-6"><svg class="w-6 h-6 shrink-0"><use href="#she"/></svg><span>抽壳</span></div>
        </div>
        <div class="ml-[9px] w-6 pt-1 flex flex-col gap-[11px]">
          <svg class="w-6 h-6"><use href="#cp"/></svg>
          <svg class="w-6 h-6"><use href="#cm"/></svg>
        </div>
        <div class="ml-[13px] w-[34px] flex flex-col items-center">
          <svg class="w-8 h-8 shrink-0"><use href="#cy"/></svg>
          <span class="mt-[6px]">更多</span>
          <svg class="mt-[7px] w-[6px] h-1"><use href="#ca"/></svg>
        </div>
      </div>
      <div class="h-[14px] relative flex items-center justify-center text-[#1b6e90]"><span class="ml-[-17px]">基本</span><svg class="absolute right-[8px] top-[5px] w-[6px] h-1"><use href="#ca"/></svg></div>
    </div>
    <!-- 同步建模 -->
    <div class="w-[115px] shrink-0 flex flex-col border-r border-[#ddd]">
      <div class="h-[72px] flex">
        <div class="ml-[10px] w-5 flex flex-col gap-[6px]">
          <svg class="w-5 h-[18px] shrink-0"><use href="#sp"/></svg>
          <svg class="w-5 h-[18px] shrink-0"><use href="#sx"/></svg>
          <svg class="w-5 h-[18px] shrink-0"><use href="#sa"/></svg>
        </div>
        <div class="ml-[7px] w-6 pt-1 flex flex-col gap-[11px]">
          <svg class="w-6 h-6"><use href="#sc"/></svg>
          <svg class="w-6 h-6"><use href="#st"/></svg>
        </div>
        <div class="ml-[15px] w-8 pt-[1px] flex flex-col items-center">
          <svg class="w-7 h-7 mt-[2px] shrink-0"><use href="#ref"/></svg>
          <span class="mt-[7px]">更多</span>
          <svg class="mt-[7px] w-[6px] h-1"><use href="#ca"/></svg>
        </div>
      </div>
      <div class="h-[14px] relative flex items-center pl-[27px] text-[#1b6e90]"><span>同步建模</span><svg class="absolute right-[8px] top-[5px] w-[6px] h-1"><use href="#ca"/></svg></div>
    </div>
    <!-- 标准化 -->
    <div class="w-[104px] shrink-0 flex flex-col border-r border-[#ddd]">
      <div class="h-[72px] pl-[5px] pt-[7px] grid grid-cols-[24px_24px_24px_24px] grid-rows-[18px_18px] gap-y-3 justify-items-center">
        <svg class="w-[18px] h-[18px]"><use href="#g1"/></svg><svg class="w-[18px] h-[18px]"><use href="#g2"/></svg><svg class="w-[18px] h-[18px]"><use href="#g3"/></svg><svg class="w-[18px] h-[18px] ml-1"><use href="#g4"/></svg>
        <svg class="w-[18px] h-[18px]"><use href="#g6"/></svg><svg class="w-[18px] h-[18px]"><use href="#g7"/></svg><svg class="w-[18px] h-[18px]"><use href="#g5"/></svg><svg class="w-[18px] h-[18px] ml-1"><use href="#g8"/></svg>
      </div>
      <div class="h-[14px] relative flex items-center pl-[2px] text-[#1b6e90]"><span>标准化工具 - G...</span><svg class="absolute right-[5px] top-[5px] w-[6px] h-1"><use href="#ca"/></svg></div>
    </div>
    <!-- 齿轮 -->
    <div class="w-[52px] shrink-0 flex flex-col border-r border-[#ddd]">
      <div class="h-[72px] pl-[5px] pt-2 grid grid-cols-[22px_22px] grid-rows-[18px_18px] gap-y-3 justify-items-center">
        <svg class="w-[18px] h-[18px]"><use href="#gt1"/></svg><svg class="w-[18px] h-[18px]"><use href="#gt2"/></svg><svg class="w-[18px] h-[18px]"><use href="#gt3"/></svg>
      </div>
      <div class="h-[14px] relative flex items-center pl-[2px] text-[#1b6e90]"><span>齿轮...</span><svg class="absolute right-[5px] top-[5px] w-[6px] h-1"><use href="#ca"/></svg></div>
    </div>
    <!-- 弹簧 -->
    <div class="w-[58px] shrink-0 flex flex-col border-r border-[#ddd]">
      <div class="h-[72px] pl-[6px] pt-2 grid grid-cols-[24px_24px] grid-rows-[18px_18px] gap-y-3 justify-items-center">
        <svg class="w-[18px] h-[18px]"><use href="#sp1"/></svg><svg class="w-[18px] h-[18px]"><use href="#sp2"/></svg><svg class="w-[18px] h-[18px]"><use href="#sp3"/></svg><svg class="w-[18px] h-[18px]"><use href="#sp4"/></svg>
      </div>
      <div class="h-[14px] relative flex items-center pl-1 text-[#1b6e90]"><span>弹簧...</span><svg class="absolute right-[5px] top-[5px] w-[6px] h-1"><use href="#ca"/></svg></div>
    </div>
    <!-- 加工 -->
    <div class="w-[52px] shrink-0 flex flex-col border-r border-[#ddd]">
      <div class="h-[72px] pl-[4px] pt-[7px] grid grid-cols-[23px_23px] grid-rows-[18px_18px] gap-y-3 justify-items-center">
        <svg class="w-[18px] h-[18px]"><use href="#m1"/></svg><svg class="w-[18px] h-[18px]"><use href="#m2"/></svg><svg class="w-[18px] h-[18px]"><use href="#m3"/></svg><svg class="w-[18px] h-[18px]"><use href="#m4"/></svg>
      </div>
      <div class="h-[14px] relative flex items-center pl-[2px] text-[#1b6e90]"><span>加工...</span><svg class="absolute right-[5px] top-[5px] w-[6px] h-1"><use href="#ca"/></svg></div>
    </div>
    <!-- 建模工具 -->
    <div class="w-[110px] shrink-0 flex flex-col border-r border-[#ddd]">
      <div class="h-[72px] pl-[4px] pt-2 grid grid-cols-[24px_24px_24px_26px] grid-rows-[18px_18px] gap-y-3 justify-items-center">
        <svg class="w-[18px] h-[18px]"><use href="#b1"/></svg><svg class="w-[18px] h-[18px]"><use href="#b2"/></svg><svg class="w-[18px] h-[18px]"><use href="#b3"/></svg><svg class="w-[18px] h-[18px]"><use href="#b4"/></svg>
        <svg class="w-[18px] h-[18px]"><use href="#b5"/></svg><svg class="w-[18px] h-[18px]"><use href="#b6"/></svg>
        <div class="flex flex-col items-center ml-1"><svg class="w-[16px] h-[9px]" viewBox="0 0 24 12"><use href="#b7" width="24" height="24"/></svg><span class="text-[7px] font-bold text-[#222] leading-[9px] font-['Liberation_Sans',sans-serif]">10H7</span></div>
        <svg class="w-[18px] h-[18px] ml-1"><use href="#g5"/></svg>
      </div>
      <div class="h-[14px] relative flex items-center pl-[2px] text-[#1b6e90]"><span>建模工具 - GC工...</span><svg class="absolute right-[7px] top-[5px] w-[6px] h-1"><use href="#ca"/></svg></div>
    </div>
    <!-- ? -->
    <div class="w-[29px] shrink-0 flex flex-col border-r border-[#ddd]">
      <div class="h-[72px] pl-[6px] pt-2 flex flex-col gap-3">
        <svg class="w-[18px] h-[18px]"><use href="#gc"/></svg><svg class="w-[18px] h-[18px]"><use href="#gc"/></svg>
      </div>
      <div class="h-[14px] relative flex items-center text-[#1b6e90]"><span>?..</span><svg class="absolute right-[5px] top-[5px] w-[6px] h-1"><use href="#ca"/></svg></div>
    </div>
    <!-- 尺寸 -->
    <div class="w-[288px] shrink-0 flex flex-col border-r border-[#ddd]">
      <div class="h-[72px] pt-[7px] pl-[6px] flex flex-col gap-3">
        <div class="h-[18px] flex items-center text-[7px] leading-[7px] text-center font-['Liberation_Sans',sans-serif]">
          <svg class="w-[18px] h-[18px] shrink-0"><use href="#d1"/></svg>
          <span class="ml-[13px] w-[10px] text-[13px] text-[#222] leading-none">X</span>
          <span class="ml-[11px] w-[22px] text-[#333]">1.00<br><span class="text-[#8a1c1c]">±.05</span></span>
          <span class="ml-[1px] w-[22px] text-[#333]">1.00<br><span class="text-[#8a1c1c]">+.02<br>-.02</span></span>
          <span class="ml-[1px] w-[22px] text-[#333]">1.00<br><span class="text-[#8a1c1c]">+.05<br>-.00</span></span>
          <span class="ml-[1px] w-[22px] text-[#333]">1.00<br><span class="text-[#8a1c1c]">+.00<br>-.02</span></span>
          <span class="ml-[4px] w-[16px] h-4 border border-[#8a1c1c] text-[11px] text-[#222] leading-[14px]">X</span>
          <span class="ml-[5px] w-[18px] text-[12px] text-[#222] leading-none"><span class="text-[#8a1c1c]">(</span>X<span class="text-[#8a1c1c]">)</span></span>
          <span class="ml-[6px] w-[18px] text-[#1c3fa0]">10H7</span>
          <span class="ml-[5px] w-[18px] text-[#1c3fa0]">10H7<br>[8⁰¹]</span>
          <span class="ml-[5px] w-[18px] text-[#1c3fa0]">10H7<br>[8⁰¹⁹]</span>
          <span class="ml-[5px] w-[18px] text-[#1c3fa0]">10<br>[8⁰¹⁹]</span>
        </div>
        <div class="h-[18px] flex items-center">
          <svg class="w-[18px] h-[18px] shrink-0"><use href="#d2"/></svg>
          <svg class="ml-[6px] w-[18px] h-[18px] shrink-0"><use href="#d3"/></svg>
          <i class="ml-[7px] w-px h-5 bg-[#ddd]"></i>
          <svg class="ml-[10px] w-[18px] h-[18px] shrink-0"><use href="#d4"/></svg>
          <svg class="ml-[5px] w-[18px] h-[18px] shrink-0"><use href="#d4"/></svg>
          <svg class="ml-[4px] w-[18px] h-[18px] shrink-0"><use href="#d5"/></svg>
        </div>
      </div>
      <div class="h-[14px] relative flex items-center justify-center text-[#1b6e90]"><span class="ml-[-16px]">尺寸快速格式化工具 - GC工具箱</span><svg class="absolute right-[7px] top-[5px] w-[6px] h-1"><use href="#ca"/></svg></div>
    </div>
    <div class="flex-1 flex items-end justify-end pr-[6px] pb-[5px]"><svg class="w-[6px] h-1"><use href="#ca"/></svg></div>
  </section>

  <!-- toolbar -->
  <section class="h-[30px] shrink-0 flex items-center border-y border-[#c8c8c8] text-[11px] leading-none">
    <svg class="ml-3 w-[14px] h-3 shrink-0" viewBox="0 0 14 12"><path d="M1 1h12M1 6h12M1 11h12" stroke="#333"/></svg>
    <span class="ml-1">菜单(<u>M</u>)</span>
    <svg class="ml-2 w-[6px] h-1 shrink-0"><use href="#ca"/></svg>
    <i class="ml-2 w-px h-5 bg-[#ddd]"></i>
    <div class="ml-[10px] w-[149px] h-[22px] shrink-0 border border-[#777] flex items-center justify-between px-[3px] pr-[4px] text-[11px]"><span>无选择过滤器</span><svg class="w-2 h-[5px]" viewBox="0 0 6 4"><use href="#ca" width="6" height="4"/></svg></div>
    <svg class="ml-[9px] w-4 h-4 shrink-0"><use href="#t-filt"/></svg>
    <div class="ml-2 w-[155px] h-[22px] shrink-0 border border-[#777] flex items-center justify-between px-[3px] pr-[4px] text-[11px]"><span>整个装配</span><svg class="w-2 h-[5px]" viewBox="0 0 6 4"><use href="#ca" width="6" height="4"/></svg></div>
    <svg class="ml-[10px] w-[18px] h-[18px] shrink-0"><use href="#t-tree"/></svg>
    <svg class="ml-[3px] w-[6px] h-1 shrink-0"><use href="#ca"/></svg>
    <svg class="ml-2 w-[18px] h-[18px] shrink-0"><use href="#t-snap"/></svg>
    <svg class="ml-[6px] w-[18px] h-[18px] shrink-0"><use href="#t-wire"/></svg>
    <svg class="ml-[7px] w-[18px] h-[18px] shrink-0"><use href="#t-sq"/></svg>
    <svg class="ml-2 w-[6px] h-1 shrink-0"><use href="#ca"/></svg>
    <svg class="ml-[10px] w-[18px] h-[18px] shrink-0"><use href="#t-f1"/></svg>
    <svg class="ml-[6px] w-[18px] h-[18px] shrink-0"><use href="#t-f2"/></svg>
    <i class="ml-[10px] w-px h-5 bg-[#ddd]"></i>
    <svg class="ml-[11px] w-[18px] h-[18px] shrink-0"><use href="#t-w1"/></svg>
    <svg class="ml-[7px] w-[18px] h-[18px] shrink-0"><use href="#t-w2"/></svg>
    <svg class="ml-[7px] w-[18px] h-[18px] shrink-0"><use href="#t-w3"/></svg>
    <svg class="ml-[7px] w-[18px] h-[18px] shrink-0"><use href="#t-hex"/></svg>
    <svg class="ml-[6px] w-[18px] h-[18px] shrink-0"><use href="#t-gear"/></svg>
    <svg class="ml-2 w-[18px] h-[18px] shrink-0"><use href="#t-fit"/></svg>
    <svg class="ml-2 w-[6px] h-1 shrink-0"><use href="#ca"/></svg>
    <svg class="ml-2 w-[18px] h-[18px] shrink-0"><use href="#t-part"/></svg>
    <svg class="ml-[6px] w-[6px] h-1 shrink-0"><use href="#ca"/></svg>
    <svg class="ml-[10px] w-[18px] h-[18px] shrink-0"><use href="#t-hex"/></svg>
    <svg class="ml-[7px] w-[6px] h-1 shrink-0"><use href="#ca"/></svg>
    <svg class="ml-[10px] w-[18px] h-[18px] shrink-0"><use href="#t-ball"/></svg>
    <svg class="ml-[5px] w-[6px] h-1 shrink-0"><use href="#ca"/></svg>
    <i class="ml-3 w-px h-5 bg-[#ddd]"></i>
    <svg class="ml-3 w-[18px] h-[18px] shrink-0"><use href="#t-axis"/></svg>
    <svg class="ml-[6px] w-[6px] h-1 shrink-0"><use href="#ca"/></svg>
    <svg class="ml-2 w-[18px] h-[18px] shrink-0"><use href="#rule"/></svg>
    <i class="ml-[10px] w-px h-5 bg-[#ddd]"></i>
    <svg class="ml-auto mr-[6px] w-[6px] h-1 shrink-0"><use href="#ca"/></svg>
  </section>

  <div class="flex-1 flex min-h-0">
    <!-- left strip -->
    <aside class="w-[32px] shrink-0 bg-[#d9d9d9] border-r border-[#aaa] flex flex-col items-center">
      <svg class="mt-[5px] w-4 h-4"><use href="#gear"/></svg>
      <svg class="mt-[29px] w-6 h-6"><use href="#l-stack"/></svg>
      <svg class="mt-[19px] w-6 h-6"><use href="#l-asm"/></svg>
      <div class="mt-[7px] ml-[3px] w-[30px] h-[45px] bg-white border-y border-[#aaa] flex items-center justify-center shrink-0 z-10"><svg class="w-6 h-6 mr-1"><use href="#t-part"/></svg></div>
      <svg class="mt-[7px] w-6 h-6"><use href="#l-book"/></svg>
      <svg class="mt-[19px] w-6 h-6"><use href="#l-dim"/></svg>
      <svg class="mt-[31px] w-6 h-6"><use href="#l-info"/></svg>
      <svg class="mt-[30px] ml-[6px] w-6 h-6"><use href="#l-web"/></svg>
      <svg class="mt-[29px] ml-[6px] w-6 h-6"><use href="#l-clock"/></svg>
      <svg class="mt-[19px] ml-[6px] w-6 h-6"><use href="#l-rb"/></svg>
      <svg class="mt-[18px] ml-[6px] w-6 h-6"><use href="#l-mill"/></svg>
      <svg class="mt-[18px] ml-[6px] w-6 h-6"><use href="#l-tool"/></svg>
      <svg class="mt-4 ml-[6px] w-6 h-6"><use href="#l-tab"/></svg>
      <svg class="mt-4 w-7 h-[10px]" viewBox="0 0 28 10"><path d="M0 4c6 0 8 5 14 4 4-1 8-5 14-4" fill="none" stroke="#556"/><path d="M0 4c6 0 8 2 14 2 4 0 8-2 14-2" fill="none" stroke="#69b"/></svg>
      <svg class="mt-1 w-[6px] h-2" viewBox="0 0 6 8"><path d="M0 0h6M0 6h6L3 2z" fill="#aaa" stroke="#aaa" stroke-width=".6"/></svg>
      <svg class="mt-[7px] w-[6px] h-1" viewBox="0 0 6 4"><path d="M0 4h6L3 0z" fill="#bbb"/></svg>
      <svg class="mt-[15px] w-[6px] h-1"><use href="#ca"/></svg>
      <svg class="mt-[9px] w-[7px] h-[7px]" viewBox="0 0 6 6"><path d="M0 0h6v1H0zM0 2h6L3 6z" fill="#333"/></svg>
    </aside>

    <!-- navigator -->
    <section class="w-[323px] shrink-0 border-r border-[#8f8f8f] flex flex-col text-[12px] leading-none">
      <div class="h-[29px] shrink-0 flex items-center pl-[10px] pr-[12px]"><span>部件导航器</span><svg class="ml-auto w-3 h-3" viewBox="0 0 12 12"><path d="M.5.5h11v11H.5z" fill="none" stroke="#333"/><path d="M0 2h12" stroke="#333" stroke-width="2"/></svg></div>
      <div class="relative ml-[6px] w-[306px] flex-1 flex flex-col border-x border-t border-[#d4d4d4] min-h-0">
        <div class="h-[21px] shrink-0 flex bg-[#f0f0f0] items-center">
          <div class="w-[190px] pl-2 flex items-center"><span>名称</span><svg class="ml-[24px] w-[9px] h-[5px]" viewBox="0 0 9 5"><path d="M0 5h9L4.5 0z" fill="#222"/></svg></div>
          <div class="w-6 h-full border-l border-[#ddd] flex items-center justify-center">当</div>
          <div class="w-6 h-full border-l border-[#ddd] flex items-center justify-center">最</div>
          <div class="flex-1 h-full border-l border-[#ddd] flex items-center pl-[6px]">附注</div>
        </div>
        <!-- dotted connector lines -->
        <i class="absolute left-[9px] top-[31px] w-px h-[80px] border-l border-dotted border-[#888]"></i>
        <i class="absolute left-[30px] top-[121px] w-px h-[150px] border-l border-dotted border-[#888]"></i>

        <div class="h-5 shrink-0 flex bg-white border-b border-[#eee]">
          <div class="w-[190px] pl-[5px] flex items-center"><svg class="w-[9px] h-[9px] shrink-0 z-10" viewBox="0 0 9 9"><path d="M.5.5h8v8h-8z" fill="#fff" stroke="#aaa"/><path d="M2 4.5h5M4.5 2v5" stroke="#222"/></svg><svg class="ml-[5px] w-4 h-4 shrink-0"><use href="#view"/></svg><span class="ml-[3px]">模型视图</span></div>
          <div class="w-6 border-l border-[#eee]"></div><div class="w-6 border-l border-[#eee]"></div><div class="flex-1 border-l border-[#eee]"></div>
        </div>
        <div class="h-5 shrink-0 flex bg-[#f9f9f9] border-b border-[#eee]">
          <div class="w-[190px] pl-[5px] flex items-center"><svg class="w-[9px] h-[9px] shrink-0 z-10" viewBox="0 0 9 9"><path d="M.5.5h8v8h-8z" fill="#fff" stroke="#aaa"/><path d="M2 4.5h5M4.5 2v5" stroke="#222"/></svg><svg class="ml-[5px] w-[15px] h-[15px] shrink-0"><use href="#ck"/></svg><svg class="ml-[1px] w-[14px] h-[14px] shrink-0"><use href="#cam"/></svg><span class="ml-1">摄像机</span></div>
          <div class="w-6 border-l border-[#eee]"></div><div class="w-6 border-l border-[#eee]"></div><div class="flex-1 border-l border-[#eee]"></div>
        </div>
        <div class="h-5 shrink-0 flex bg-white border-b border-[#eee]">
          <div class="w-[190px] pl-[5px] flex items-center"><svg class="w-[9px] h-[9px] shrink-0 z-10" viewBox="0 0 9 9"><path d="M.5.5h8v8h-8z" fill="#fff" stroke="#aaa"/><path d="M2 4.5h5" stroke="#222"/></svg><svg class="ml-[5px] w-4 h-4 shrink-0"><use href="#fold"/></svg><span class="ml-[3px]">用户表达式</span></div>
          <div class="w-6 border-l border-[#eee]"></div><div class="w-6 border-l border-[#eee] flex items-center justify-center"><svg class="w-4 h-4"><use href="#ck"/></svg></div><div class="flex-1 border-l border-[#eee]"></div>
        </div>
        <div class="h-5 shrink-0 flex bg-[#f9f9f9] border-b border-[#eee]">
          <div class="w-[190px] pl-[41px] flex items-center"><svg class="w-[10px] h-[6px] shrink-0" viewBox="0 0 10 6"><path d="M0 1h10M0 5h10" stroke="#333"/></svg><span class="ml-[7px] text-[12.5px]">offset=0</span></div>
          <div class="w-6 border-l border-[#eee]"></div><div class="w-6 border-l border-[#eee] flex items-center justify-center"><svg class="w-4 h-4"><use href="#ck"/></svg></div><div class="flex-1 border-l border-[#eee]"></div>
        </div>
        <div class="h-5 shrink-0 flex bg-white border-b border-[#eee]">
          <div class="w-[190px] pl-[5px] flex items-center"><svg class="w-[9px] h-[9px] shrink-0 z-10" viewBox="0 0 9 9"><path d="M.5.5h8v8h-8z" fill="#fff" stroke="#aaa"/><path d="M2 4.5h5" stroke="#222"/></svg><svg class="ml-[6px] w-[15px] h-[15px] shrink-0" viewBox="0 0 16 16"><circle cx="8" cy="8" r="7.5" fill="url(#ball)"/></svg><svg class="ml-[1px] w-[15px] h-[15px] shrink-0"><use href="#hist"/></svg><span class="ml-[3px]">模型历史记录</span></div>
          <div class="w-6 border-l border-[#eee]"></div><div class="w-6 border-l border-[#eee] flex items-center justify-center"><svg class="w-4 h-4"><use href="#ck"/></svg></div><div class="flex-1 border-l border-[#eee]"></div>
        </div>
        <div class="h-5 shrink-0 flex bg-[#f9f9f9] border-b border-[#eee]">
          <div class="w-[190px] pl-[40px] flex items-center"><svg class="w-[14px] h-[14px] shrink-0"><use href="#chk"/></svg><svg class="ml-[1px] w-[15px] h-[15px] shrink-0"><use href="#csys"/></svg><span class="ml-1 text-[#aaa]">基准坐标系 (0)</span></div>
          <div class="w-6 border-l border-[#eee]"></div><div class="w-6 border-l border-[#eee] flex items-center justify-center"><svg class="w-4 h-4"><use href="#ck"/></svg></div><div class="flex-1 border-l border-[#eee]"></div>
        </div>
        <div class="h-5 shrink-0 flex bg-white border-b border-[#eee]">
          <div class="w-[190px] pl-[40px] flex items-center"><svg class="w-[14px] h-[14px] shrink-0"><use href="#chk"/></svg><svg class="ml-[1px] w-[15px] h-[15px] shrink-0"><use href="#body"/></svg><span class="ml-1">体 (1)</span></div>
          <div class="w-6 border-l border-[#eee]"></div><div class="w-6 border-l border-[#eee] flex items-center justify-center"><svg class="w-4 h-4"><use href="#ck"/></svg></div><div class="flex-1 border-l border-[#eee]"></div>
        </div>
        <div class="h-5 shrink-0 flex bg-[#f9f9f9] border-b border-[#eee]">
          <div class="w-[190px] pl-[40px] flex items-center"><svg class="w-[14px] h-[14px] shrink-0"><use href="#chk"/></svg><svg class="ml-[1px] w-[15px] h-[15px] shrink-0"><use href="#hsz"/></svg><span class="ml-1">调整孔大小 (2)</span></div>
          <div class="w-6 border-l border-[#eee]"></div><div class="w-6 border-l border-[#eee] flex items-center justify-center"><svg class="w-4 h-4"><use href="#ck"/></svg></div><div class="flex-1 border-l border-[#eee]"></div>
        </div>
        <div class="h-5 shrink-0 flex bg-white border-b border-[#eee]">
          <div class="w-[190px] pl-[40px] flex items-center"><svg class="w-[14px] h-[14px] shrink-0"><use href="#chk"/></svg><svg class="ml-[1px] w-[15px] h-[15px] shrink-0"><use href="#rad"/></svg><span class="ml-1">辐射面 (3)</span></div>
          <div class="w-6 border-l border-[#eee]"></div><div class="w-6 border-l border-[#eee] flex items-center justify-center"><svg class="w-4 h-4"><use href="#ck"/></svg></div><div class="flex-1 border-l border-[#eee]"></div>
        </div>
        <div class="h-5 shrink-0 flex bg-[#f9f9f9] border-b border-[#eee]">
          <div class="w-[190px] pl-[40px] flex items-center"><svg class="w-[14px] h-[14px] shrink-0"><use href="#chk"/></svg><svg class="ml-[1px] w-[15px] h-[15px] shrink-0"><use href="#sec"/></svg><span class="ml-1">编辑横截面 (4)</span></div>
          <div class="w-6 border-l border-[#eee]"></div><div class="w-6 border-l border-[#eee] flex items-center justify-center"><svg class="w-4 h-4"><use href="#ck"/></svg></div><div class="flex-1 border-l border-[#eee]"></div>
        </div>
        <div class="h-5 shrink-0 flex bg-white border-b border-[#eee]">
          <div class="w-[190px] pl-[40px] flex items-center"><svg class="w-[14px] h-[14px] shrink-0"><use href="#chk"/></svg><svg class="ml-[1px] w-[15px] h-[15px] shrink-0"><use href="#sec"/></svg><span class="ml-1">编辑横截面 (5)</span></div>
          <div class="w-6 border-l border-[#eee]"></div><div class="w-6 border-l border-[#eee] flex items-center justify-center"><svg class="w-4 h-4"><use href="#ck"/></svg></div><div class="flex-1 border-l border-[#eee]"></div>
        </div>
        <div class="h-5 shrink-0 flex bg-[#f9f9f9] border-b border-[#eee]">
          <div class="w-[190px] pl-[40px] flex items-center"><svg class="w-[14px] h-[14px] shrink-0"><use href="#chk"/></svg><svg class="ml-[1px] w-[15px] h-[15px] shrink-0"><use href="#rad"/></svg><span class="ml-1">辐射面 (6)</span></div>
          <div class="w-6 border-l border-[#eee]"></div><div class="w-6 border-l border-[#eee] flex items-center justify-center"><svg class="w-4 h-4"><use href="#ck"/></svg></div><div class="flex-1 border-l border-[#eee]"></div>
        </div>
        <div class="h-5 shrink-0 flex bg-white border-b border-[#eee]">
          <div class="w-[190px] pl-[40px] flex items-center"><svg class="w-[14px] h-[14px] shrink-0"><use href="#chk"/></svg><svg class="ml-[1px] w-[15px] h-[15px] shrink-0"><use href="#hsz"/></svg><span class="ml-1 font-bold">调整孔大小 (7)</span></div>
          <div class="w-6 border-l border-[#eee] flex items-center justify-center"><svg class="w-[8px] h-3"><use href="#dep"/></svg></div><div class="w-6 border-l border-[#eee] flex items-center justify-center"><svg class="w-4 h-4"><use href="#ck"/></svg></div><div class="flex-1 border-l border-[#eee]"></div>
        </div>
        <!-- empty rows -->
        <div class="flex-1 min-h-0 bg-[repeating-linear-gradient(to_bottom,#f9f9f9_0,#f9f9f9_19px,#eeeeee_19px,#eeeeee_20px,#ffffff_20px,#ffffff_39px,#eeeeee_39px,#eeeeee_40px)] relative">
          <i class="absolute top-0 bottom-[18px] left-[190px] w-px bg-[#eee]"></i><i class="absolute top-0 bottom-[18px] left-[214px] w-px bg-[#eee]"></i><i class="absolute top-0 bottom-[18px] left-[238px] w-px bg-[#eee]"></i>
          <div class="absolute inset-x-0 bottom-0 h-[19px] bg-white"></div>
          <div class="absolute left-[1px] right-[1px] bottom-[2px] h-[15px] bg-[#f0f0f0] flex items-center">
            <svg class="ml-[5px] w-[7px] h-[9px]" viewBox="0 0 7 9"><path d="M5.5 1L2 4.5 5.5 8" fill="none" stroke="#444" stroke-width="1.6"/></svg>
            <div class="ml-[5px] w-[240px] h-full bg-[#c9c9c9]"></div>
            <svg class="ml-auto mr-[5px] w-[7px] h-[9px]" viewBox="0 0 7 9"><path d="M1.5 1L5 4.5 1.5 8" fill="none" stroke="#444" stroke-width="1.6"/></svg>
          </div>
        </div>
      </div>
      <div class="ml-[6px] w-[307px] h-[5px] shrink-0 bg-[#e4e4e4] border border-[#a8a8a8]"></div>
      <div class="ml-[6px] w-[307px] shrink-0 text-[14px] text-[#1b6e90]">
        <div class="h-6 border-b-2 border-[#cfcfcf] flex items-center pl-[10px] pt-[3px]"><svg class="w-[5px] h-2" viewBox="0 0 5 8"><path d="M0 0l5 4-5 4z" fill="#1b6e90"/></svg><span class="ml-[9px]">搜索</span></div>
        <div class="h-6 border-b-2 border-[#cfcfcf] flex items-center pl-[10px] pt-[3px]"><svg class="w-[5px] h-2" viewBox="0 0 5 8"><path d="M0 0l5 4-5 4z" fill="#1b6e90"/></svg><span class="ml-[9px]">相关性</span></div>
        <div class="h-6 border-b-2 border-[#cfcfcf] flex items-center pl-[10px] pt-[3px]"><svg class="w-[5px] h-2" viewBox="0 0 5 8"><path d="M0 0l5 4-5 4z" fill="#1b6e90"/></svg><span class="ml-[9px]">细节</span></div>
        <div class="h-6 border-b-2 border-[#cfcfcf] flex items-center pl-[10px] pt-[3px]"><svg class="w-[5px] h-2" viewBox="0 0 5 8"><path d="M0 0l5 4-5 4z" fill="#1b6e90"/></svg><span class="ml-[9px]">预览</span></div>
      </div>
      <div class="h-[6px] shrink-0"></div>
    </section>

    <!-- graphics window -->
    <section class="flex-1 flex flex-col min-w-0">
      <div class="h-[26px] shrink-0 border-b-2 border-[#0d6186] flex">
        <div class="mt-[1px] w-[99px] bg-[#0d6186] text-white text-[11.5px] leading-none flex items-center pl-[5px]">
          <svg class="w-[14px] h-[14px] shrink-0"><use href="#t-part"/></svg>
          <span class="ml-[7px]">1.1.prt</span>
          <svg class="ml-[6px] w-[10px] h-[11px]" viewBox="0 0 10 11"><path d="M1 1h6l2 2v7H1z" fill="none" stroke="#fff"/><path d="M3 6l4-3" stroke="#fff"/></svg>
          <svg class="ml-[6px] w-[9px] h-[9px]" viewBox="0 0 9 9"><path d="M1 1l7 7M8 1L1 8" stroke="#fff" stroke-width="1.8"/></svg>
        </div>
      </div>
      <div class="relative flex-1 min-h-0">
        <svg class="absolute left-0 top-0" width="872" height="638" viewBox="359 213 872 638">
          <g transform="rotate(11.7 795 531)">
            <ellipse cx="794" cy="534.5" rx="224.3" ry="189.4" fill="#363e3d"/>
            <ellipse cx="795" cy="530" rx="224.3" ry="189.4" fill="#c6d5d7" stroke="#667" stroke-width=".7"/>
            <ellipse cx="795.5" cy="526.5" rx="204.4" ry="169.3" fill="#515e5e" stroke="#333" stroke-width=".6"/>
            <ellipse cx="794" cy="531" rx="202" ry="167" fill="#c6d5d7" stroke="#3f4a4a" stroke-width=".9"/>
            <ellipse cx="794.5" cy="530" rx="197" ry="160.5" fill="none" stroke="#4a5555" stroke-width=".9"/>
          </g>
          <ellipse cx="795" cy="533.5" rx="178" ry="146" transform="rotate(15.5 795 533.5)" fill="#fff" stroke="#2e3535" stroke-width="1.1"/>
          <g fill="#48504f"><circle cx="760" cy="349" r="1.9"/><circle cx="1004" cy="507" r="1.9"/><circle cx="587" cy="548" r="1.9"/><circle cx="831" cy="705" r="1.9"/></g>
          <path d="M613 612c2-4 4-6 7-7-1 3-1 7-3 10-2 0-3-1-4-3z" fill="#5a6464" stroke="#333" stroke-width=".5"/>
          <path d="M616 616c3 3 8 4 11 1l3 2" fill="none" stroke="#444" stroke-width=".6"/>
          <!-- triad -->
          <g fill="none" stroke="#a9a9a9" stroke-width=".9"><path d="M429 737l36-4 4 30-34 4zM429 737l-3 16 7 32 37-5-1-17M435 767l-2 18"/></g>
          <path d="M443 735l-4-19-2 1 2-8 5 7-2 1 4 18z" fill="#3aa03a"/>
          <path d="M448 751l2-18-3 1 5-8 4 7-3 0-2 18z" fill="#0d2f8c"/>
          <path d="M469 756l25-2 0-3 14 3-14 4 0-2-25 2z" fill="#cf3131"/>
        </svg>
        <span class="absolute left-[411px] top-[298px] text-[19.5px] leading-none font-bold text-[#e00b0b]">原尺寸</span>
        <span class="absolute left-[73px] top-[481px] text-[11px] leading-none text-[#8bbf8b] font-['Liberation_Sans',sans-serif]">Y</span>
        <span class="absolute left-[91px] top-[503px] text-[11px] leading-none text-[#3b5fcf] font-['Liberation_Sans',sans-serif]">Z</span>
        <span class="absolute left-[153px] top-[534px] text-[11px] leading-none text-[#d46a6a] font-['Liberation_Sans',sans-serif]">X</span>
      </div>
    </section>

    <!-- right strip -->
    <aside class="relative w-[35px] shrink-0 flex flex-col items-center pt-[11px] gap-[8.2px]">
      <i class="absolute left-0 top-[26px] bottom-0 w-px bg-[#d4d4d4]"></i>
      <svg class="w-6 h-6 shrink-0"><use href="#r-wr"/></svg>
      <svg class="w-6 h-6 shrink-0"><use href="#r-hole"/></svg>
      <svg class="w-6 h-6 shrink-0"><use href="#r-cb"/></svg>
      <svg class="w-6 h-6 shrink-0" viewBox="0 0 24 24"><circle cx="12" cy="12" r="11.2" fill="#fff" stroke="#37b1d1" stroke-width="1"/></svg>
      <svg class="w-6 h-6 shrink-0"><use href="#t-part"/></svg>
      <svg class="w-6 h-6 shrink-0"><use href="#rule"/></svg>
      <svg class="w-6 h-6 shrink-0" viewBox="0 0 24 24"><circle cx="12" cy="12" r="11" fill="#fff" stroke="#444"/><path d="M8.5 9a3.5 3.5 0 1 1 5 3.2c-1 .6-1.5 1.2-1.5 2.4M12 17v2" fill="none" stroke="#444" stroke-width="1.1"/></svg>
      <svg class="w-6 h-6 shrink-0"><use href="#r-sk"/></svg>
      <svg class="w-6 h-6 shrink-0"><use href="#sc"/></svg>
      <svg class="w-6 h-6 shrink-0"><use href="#r-st"/></svg>
      <svg class="absolute left-[7px] bottom-[6px] w-[5px] h-[7px]" viewBox="0 0 5 7"><path d="M5 0v7L0 3.5z" fill="#222"/></svg>
    </aside>
  </div>

  <footer class="h-[23px] shrink-0 border-t border-[#a8a8a8] bg-white"></footer>
</main>
<div class="h-[7px] shrink-0 bg-[#0d6186]"></div>

<!-- annotations lying over the UI -->
<svg class="absolute left-0 top-0 pointer-events-none" width="1270" height="881" viewBox="0 0 1270 881">
  <ellipse cx="126" cy="306" rx="50.5" ry="19.5" transform="rotate(2 126 306)" fill="none" stroke="#d00f1a" stroke-width="3"/>
  <rect x="1070" y="850" width="175" height="3" fill="#fff" opacity=".75"/>
  <g opacity=".92">
    <path d="M1023 786l36 21v41l-36 19-36-19v-41z" fill="#bfe7fc"/>
    <path d="M1000 798l23-12 14 8c1 7 3 14 6 21l-20-10-11 6c-2-6-6-11-12-13z" fill="#d6f0fd"/>
    <path d="M1037 794l22 13v23c-2 10-8 16-16 19v-34c-3-7-5-14-6-21z" fill="#98d8f9"/>
    <path d="M1059 830v18l-36 19-14-8c-3-6-5-13-6-20l20 10 12-7c10 1 19-3 24-12z" fill="#84d2fb"/>
    <path d="M987 848v-23c2-11 7-17 16-19v33c0 7 3 14 6 20z" fill="#bfe7fc"/>
    <path d="M1023 804l20 11v24l-20 11-20-11v-24z" fill="#fff"/>
    <path d="M1023 809l16 9-16 9-16-9z" fill="#c6e8fb"/>
    <path d="M1007 818l16 9v18l-16-9z" fill="#a9def9"/>
    <path d="M1039 818l-16 9v18l16-9z" fill="#80cdf5"/>
  </g>
</svg>
</div>
</body></html>
